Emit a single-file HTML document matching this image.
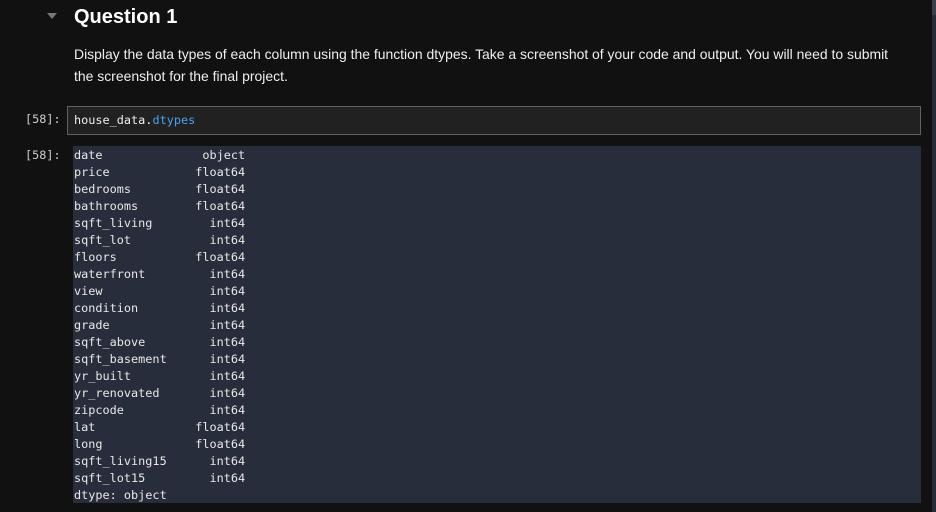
<!DOCTYPE html>
<html><head><style>
html,body{margin:0;padding:0;}
body{width:936px;height:512px;background:#111111;position:relative;overflow:hidden;font-family:"Liberation Sans",sans-serif;color:#f0f0f0;}
.tri{position:absolute;left:47px;top:13px;width:0;height:0;border-left:5px solid transparent;border-right:5px solid transparent;border-top:6px solid #777;}
h1{position:absolute;left:74px;top:5px;margin:0;font-size:20px;font-weight:bold;color:#fff;line-height:24px;}
.p{position:absolute;left:74px;top:43px;font-size:13.95px;line-height:22px;white-space:nowrap;color:#eee;}
.pr{position:absolute;left:25px;font-family:"DejaVu Sans Mono",monospace;font-size:11.85px;color:#ccc;}
.in{position:absolute;left:67px;top:106px;width:852px;height:27px;background:#212121;border:1px solid #616161;}
.in span{position:absolute;left:6px;top:6px;font-family:"DejaVu Sans Mono",monospace;font-size:11.85px;color:#eee;}
.out{position:absolute;left:73px;top:146px;width:848px;height:357px;background:#272d3a;}
pre{margin:0;position:absolute;left:1px;top:1px;font-family:"DejaVu Sans Mono",monospace;font-size:11.85px;line-height:17px;color:#e8e8e8;}
.sb{position:absolute;left:932px;top:0;width:4px;height:512px;background:#262c38;}
.sb i{position:absolute;left:0;top:0;width:4px;height:15px;background:#3a404c;}
</style></head><body>
<div class="tri"></div>
<h1>Question 1</h1>
<div class="p">Display the data types of each column using the function dtypes. Take a screenshot of your code and output. You will need to submit<br>the screenshot for the final project.</div>
<div class="pr" style="top:112px">[58]:</div>
<div class="in"><span>house_data.<span style="position:static;color:#4aa3f0">dtypes</span></span></div>
<div class="pr" style="top:148px">[58]:</div>
<div class="out"><pre>date              object
price            float64
bedrooms         float64
bathrooms        float64
sqft_living        int64
sqft_lot           int64
floors           float64
waterfront         int64
view               int64
condition          int64
grade              int64
sqft_above         int64
sqft_basement      int64
yr_built           int64
yr_renovated       int64
zipcode            int64
lat              float64
long             float64
sqft_living15      int64
sqft_lot15         int64
dtype: object</pre></div>
<div class="sb"><i></i></div>
</body></html>
